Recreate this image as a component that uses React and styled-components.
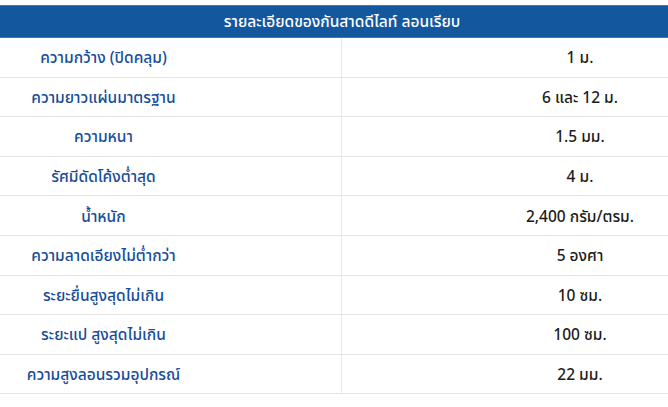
import React from "react";
import styled, { createGlobalStyle } from "styled-components";

const Global = createGlobalStyle`
  html, body { margin: 0; padding: 0; background: #fff; }
  body { overflow: hidden; font-family: "Noto Sans Thai", "Noto Sans Thai Looped", "Noto Sans", "Liberation Sans", sans-serif; }
`;

const Viewport = styled.div`
  width: 668px;
  overflow: hidden;
  padding-top: 5px;
`;

const Table = styled.div`
  width: 952px;
  margin-left: -134px;
  display: grid;
  grid-template-columns: 476px 476px;
`;

const Header = styled.div`
  grid-column: 1 / -1;
  box-sizing: border-box;
  height: 33px;
  padding-top: 1px;
  background: #13579f;
  border-top: 1px solid #3f77b6;
  border-bottom: 1px solid #3f77b6;
  color: #fff;
  font-size: 15.5px;
  font-weight: 500;
  display: flex;
  align-items: center;
  justify-content: center;
`;

const Cell = styled.div`
  box-sizing: border-box;
  height: 39.6px;
  padding-top: 3px;
  border-bottom: 1px solid #e4e4e4;
  border-right: ${(p) => (p.$label ? "1px solid #e8e8e8" : "none")};
  display: flex;
  align-items: center;
  justify-content: center;
  font-size: 15.5px;
  font-weight: 500;
  color: ${(p) => (p.$label ? "#174d9a" : "#1c1c1c")};
`;

const rows = [
  ["ความกว้าง (ปิดคลุม)", "1 ม."],
  ["ความยาวแผ่นมาตรฐาน", "6 และ 12 ม."],
  ["ความหนา", "1.5 มม."],
  ["รัศมีดัดโค้งต่ำสุด", "4 ม."],
  ["น้ำหนัก", "2,400 กรัม/ตรม."],
  ["ความลาดเอียงไม่ต่ำกว่า", "5 องศา"],
  ["ระยะยื่นสูงสุดไม่เกิน", "10 ซม."],
  ["ระยะแป สูงสุดไม่เกิน", "100 ซม."],
  ["ความสูงลอนรวมอุปกรณ์", "22 มม."],
];

export default function App() {
  return (
    <>
      <Global />
      <Viewport>
        <Table>
          <Header>รายละเอียดของกันสาดดีไลท์ ลอนเรียบ</Header>
          {rows.map(([k, v]) => (
            <React.Fragment key={k}>
              <Cell $label>{k}</Cell>
              <Cell>{v}</Cell>
            </React.Fragment>
          ))}
        </Table>
      </Viewport>
    </>
  );
}
